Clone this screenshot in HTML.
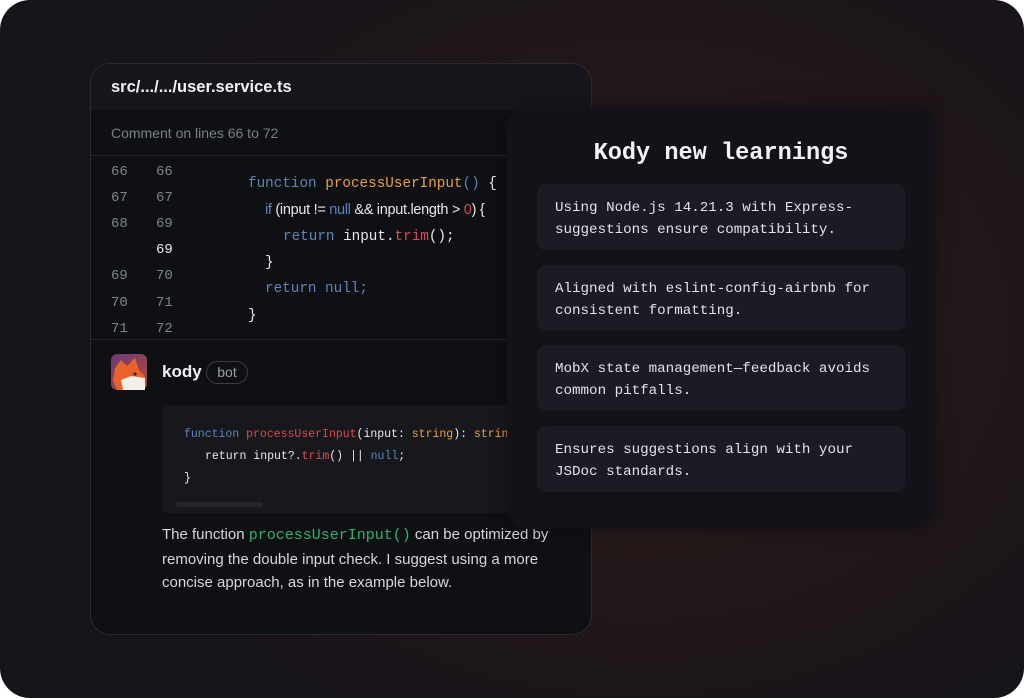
<!DOCTYPE html>
<html><head><meta charset="utf-8"><style>
*{margin:0;padding:0;box-sizing:border-box}
body{width:1024px;height:698px;background:#fff;position:relative;overflow:hidden;font-family:"Liberation Sans",sans-serif}
.bg{position:absolute;left:0;top:0;width:1024px;height:698px;border-radius:30px;background:radial-gradient(ellipse 560px 440px at 640px 330px,#2e1c1b 0%,#241819 50%,#17141a 100%)}
.a{position:absolute;white-space:pre}
.m{font-family:"Liberation Mono",monospace}
.card{position:absolute;left:90px;top:63px;width:502px;height:572px;border-radius:20px;background:#0e1014;border:1px solid #2a2b31;overflow:hidden}
.hdr{position:absolute;left:0;top:0;width:100%;height:46px;background:#15171c}
.ln{position:absolute;font-family:"Liberation Mono",monospace;font-size:14px;color:#7f848d}
.panel{position:absolute;left:507px;top:106px;width:428px;height:423px;border-radius:20px;background:#141218;box-shadow:0 0 20px rgba(0,0,0,0.3)}
.item{position:absolute;left:30px;width:368px;height:66px;border-radius:9px;background:#1d1a24;font-family:"Liberation Mono",monospace;font-size:14.2px;line-height:21.5px;color:#e4e2e8;padding:14px 18px 0}
</style></head><body>
<div class="bg"></div>
<div class="card">
 <div class="hdr"></div>
 <div class="a" style="left:20px;top:14px;font-size:16.5px;font-weight:bold;color:#f1f2f4">src/.../.../user.service.ts</div>
 <div class="a" style="left:20px;top:61px;font-size:14px;color:#7c8089">Comment on lines 66 to 72</div>
 <div style="position:absolute;left:0;top:91px;width:100%;height:1px;background:#24262c"></div>
 <div class="ln" style="left:20px;top:100px">66</div><div class="ln" style="left:65px;top:100px">66</div>
 <div class="ln" style="left:20px;top:126px">67</div><div class="ln" style="left:65px;top:126px">67</div>
 <div class="ln" style="left:20px;top:152px">68</div><div class="ln" style="left:65px;top:152px">69</div>
 <div class="ln" style="left:65px;top:178px;color:#e8e9ec">69</div>
 <div class="ln" style="left:20px;top:204px">69</div><div class="ln" style="left:65px;top:204px">70</div>
 <div class="ln" style="left:20px;top:231px">70</div><div class="ln" style="left:65px;top:231px">71</div>
 <div class="ln" style="left:20px;top:257px">71</div><div class="ln" style="left:65px;top:257px">72</div>
 <div class="a m" style="left:157px;top:112px;font-size:14.3px;color:#e8e8e8"><span style="color:#5b86b8">function</span> <span style="color:#e9a040">processUserInput</span><span style="color:#5b86b8">()</span> {</div>
 <div class="a" style="left:174px;top:138px;font-size:14.5px;color:#e8e8e8;letter-spacing:-0.3px"><span style="color:#5b86b8">if</span> (input != <span style="color:#5b86b8">null</span> &amp;&amp; input.length &gt; <span style="color:#e0474f">0</span>) {</div>
 <div class="a m" style="left:192px;top:165px;font-size:14.3px;color:#e8e8e8"><span style="color:#5b86b8">return</span> input.<span style="color:#e0474f">trim</span>();</div>
 <div class="a m" style="left:174px;top:191px;font-size:14.3px;color:#e8e8e8">}</div>
 <div class="a m" style="left:174px;top:217px;font-size:14.3px;color:#5b86b8">return null;</div>
 <div class="a m" style="left:157px;top:244px;font-size:14.3px;color:#e8e8e8">}</div>
 <div style="position:absolute;left:0;top:275px;width:100%;height:1px;background:#24262c"></div>
 <svg style="position:absolute;left:20px;top:290px" width="36" height="36" viewBox="0 0 36 36">
  <defs><linearGradient id="g" x1="0" y1="0" x2="1" y2="1"><stop offset="0" stop-color="#6a3a78"/><stop offset="1" stop-color="#b04a3a"/></linearGradient></defs>
  <rect width="36" height="36" rx="6" fill="url(#g)"/>
  <path d="M4 14 L10 6 L16 12 L24 4 L28 16 L34 22 L34 36 L6 36 L2 26Z" fill="#e8622a"/>
  <path d="M10 26 L20 22 L34 24 L34 36 L12 36Z" fill="#f4efe8"/>
  <circle cx="24" cy="20" r="1.5" fill="#222"/>
 </svg>
 <div class="a" style="left:71px;top:298px;font-size:17px;font-weight:bold;color:#f1f2f4">kody</div>
 <div class="a" style="left:115px;top:297px;width:42px;height:23px;border:1px solid #3a3c42;border-radius:12px;font-size:14px;color:#9a9ea6;text-align:center;line-height:21px">bot</div>
 <div style="position:absolute;left:71px;top:341px;width:440px;height:108px;border-radius:6px;background:#16181d"></div>
 <div class="a m" style="left:93px;top:364px;font-size:11.5px;color:#e8e8e8"><span style="color:#5b86b8">function</span> <span style="color:#e0474f">processUserInput</span>(input: <span style="color:#e9a040">string</span>): <span style="color:#e9a040">string</span></div>
 <div class="a m" style="left:114px;top:386px;font-size:11.5px;color:#e8e8e8">return input?.<span style="color:#e0474f">trim</span>() || <span style="color:#5b86b8">null</span>;</div>
 <div class="a m" style="left:93px;top:408px;font-size:11.5px;color:#e8e8e8">}</div>
 <div style="position:absolute;left:85px;top:438px;width:87px;height:5px;border-radius:3px;background:#24262c"></div>
 <div class="a" style="left:71px;top:459px;font-size:15px;line-height:23.5px;color:#d6d7da">The function <span class="m" style="color:#2fb36a;font-size:15px">processUserInput()</span> can be optimized by
removing the double input check. I suggest using a more
concise approach, as in the example below.</div>
</div>
<div class="panel">
 <div class="a m" style="left:0;width:428px;text-align:center;top:34px;font-size:23.6px;font-weight:bold;color:#f4f2f6">Kody new learnings</div>
 <div class="item" style="top:78px">Using Node.js 14.21.3 with Express-
suggestions ensure compatibility.</div>
 <div class="item" style="top:159px">Aligned with eslint-config-airbnb for
consistent formatting.</div>
 <div class="item" style="top:239px">MobX state management—feedback avoids
common pitfalls.</div>
 <div class="item" style="top:320px">Ensures suggestions align with your
JSDoc standards.</div>
</div>
</body></html>
